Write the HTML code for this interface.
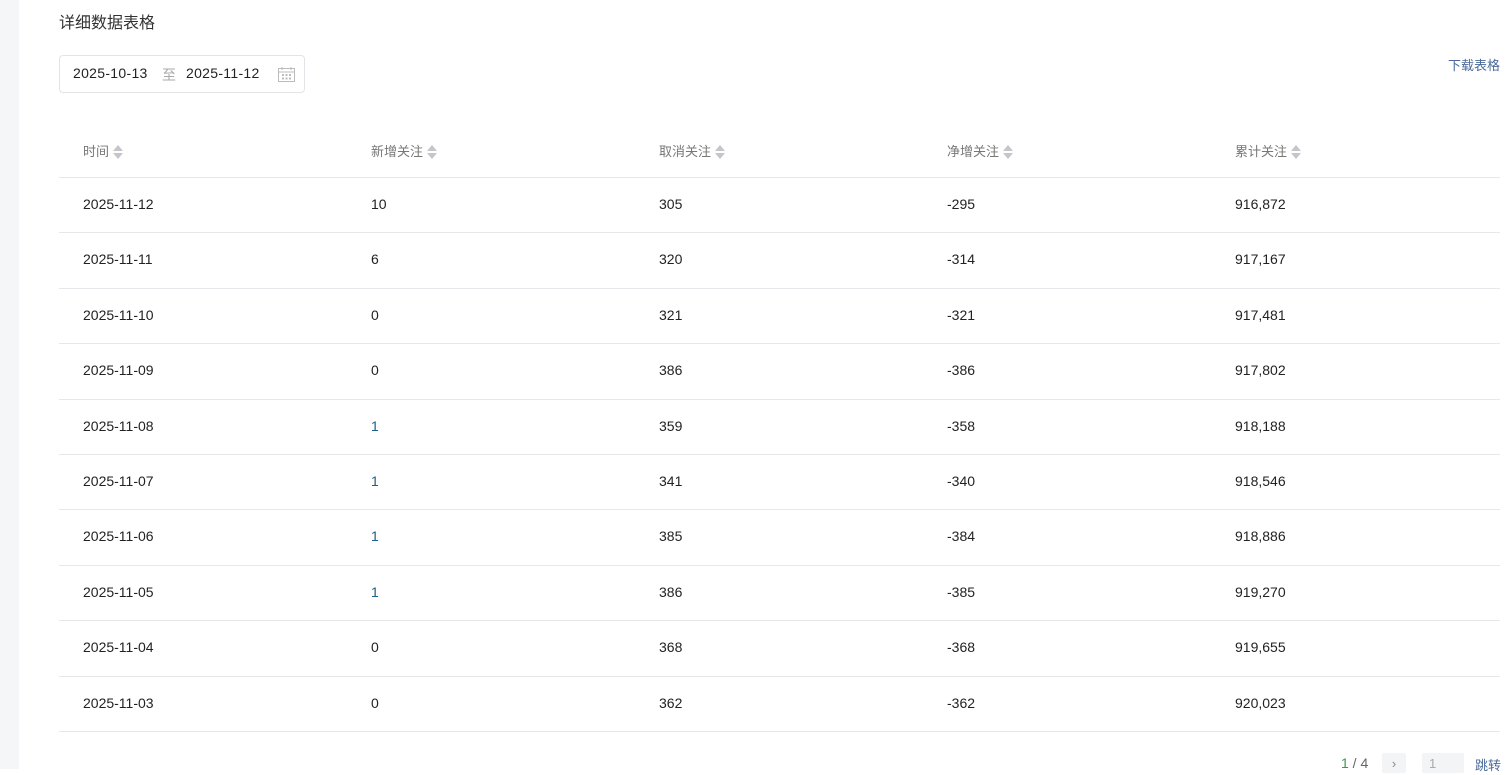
<!DOCTYPE html>
<html><head><meta charset="utf-8"><style>
body{margin:0;width:1511px;height:769px;overflow:hidden;background:#fff;font-family:"Liberation Sans","Noto Sans CJK SC",sans-serif;color:#222;position:relative}
.side{position:absolute;left:0;top:0;width:19px;height:769px;background:#f5f6f8}
.a{position:absolute;white-space:nowrap}
.title{left:59px;top:9px;font-size:16px;color:#333}
.date{left:59px;top:55px;width:244px;height:36px;border:1px solid #e3e4e8;border-radius:4px;font-size:14px}
.dl{right:11px;top:55px;font-size:13px;color:#4a6a99}
.line{position:absolute;left:59px;width:1441px;height:1px;background:#e7e8eb}
.h{font-size:13px;color:#777;top:141px}
.c{font-size:14px;color:#222}
.sort{display:inline-block;vertical-align:middle;margin-left:4px;width:10px;height:16px;position:relative;top:-1px}
</style></head><body>
<div class="side"></div>
<div class="a title">详细数据表格</div>
<div class="a date"><span class="a" style="left:13px;top:9px;letter-spacing:0.3px">2025-10-13</span><span class="a" style="left:102px;top:9px;color:#aaa">至</span><span class="a" style="left:126px;top:9px;letter-spacing:0.3px">2025-11-12</span>
<svg class="a" style="left:218px;top:11px" width="17" height="15" viewBox="0 0 17 15"><rect x="0.5" y="1.5" width="16" height="13" fill="none" stroke="#bbb"/><line x1="0.5" y1="5" x2="16.5" y2="5" stroke="#bbb"/><line x1="4" y1="0" x2="4" y2="3" stroke="#bbb"/><line x1="13" y1="0" x2="13" y2="3" stroke="#bbb"/><g fill="#bbb"><rect x="4" y="7" width="2" height="2"/><rect x="7.5" y="7" width="2" height="2"/><rect x="11" y="7" width="2" height="2"/><rect x="4" y="10.5" width="2" height="2"/><rect x="7.5" y="10.5" width="2" height="2"/><rect x="11" y="10.5" width="2" height="2"/></g></svg></div>
<div class="a dl">下载表格</div>
<div id="t"></div>
<div class="line" style="top:731px"></div>
<div class="a" style="left:1341px;top:755px;font-size:14px;color:#666"><span style="color:#3a9a4a">1</span> / 4</div>
<div class="a" style="left:1382px;top:753px;width:24px;height:20px;background:#f3f4f6;border-radius:2px;font-size:13px;color:#888;text-align:center;line-height:22px">›</div>
<div class="a" style="left:1422px;top:753px;width:42px;height:20px;background:#f3f4f6;border-radius:2px;font-size:13px;color:#aaa;padding-left:7px;line-height:22px;box-sizing:border-box">1</div>
<div class="a" style="left:1475px;top:755px;font-size:13px;color:#4a6a99">跳转</div>
<script>
var sortsvg='<svg class="sort" viewBox="0 0 10 16"><path d="M0 7L5 1L10 7Z" fill="#c4c6cc"/><path d="M0 9L10 9L5 15Z" fill="#c4c6cc"/></svg>';
var xs=[83,371,659,947,1235];
var hs=['时间','新增关注','取消关注','净增关注','累计关注'];
var h='';
hs.forEach(function(s,i){h+='<div class="a h" style="left:'+xs[i]+'px">'+s+sortsvg+'</div>';});
h+='<div class="line" style="top:177px"></div>';
var d=[['2025-11-12','10','305','-295','916,872'],['2025-11-11','6','320','-314','917,167'],['2025-11-10','0','321','-321','917,481'],['2025-11-09','0','386','-386','917,802'],['2025-11-08','1','359','-358','918,188'],['2025-11-07','1','341','-340','918,546'],['2025-11-06','1','385','-384','918,886'],['2025-11-05','1','386','-385','919,270'],['2025-11-04','0','368','-368','919,655'],['2025-11-03','0','362','-362','920,023']];
d.forEach(function(r,j){var top=177+j*55.4;var ty=top+19;
r.forEach(function(v,i){var col=(i==1&&v=='1')?'color:#1a5f8a;':'';h+='<div class="a c" style="left:'+xs[i]+'px;top:'+ty+'px;'+col+'">'+v+'</div>';});
if(j<9)h+='<div class="line" style="top:'+Math.round(top+55.4)+'px"></div>';});
document.getElementById('t').innerHTML=h;
</script>
</body></html>
